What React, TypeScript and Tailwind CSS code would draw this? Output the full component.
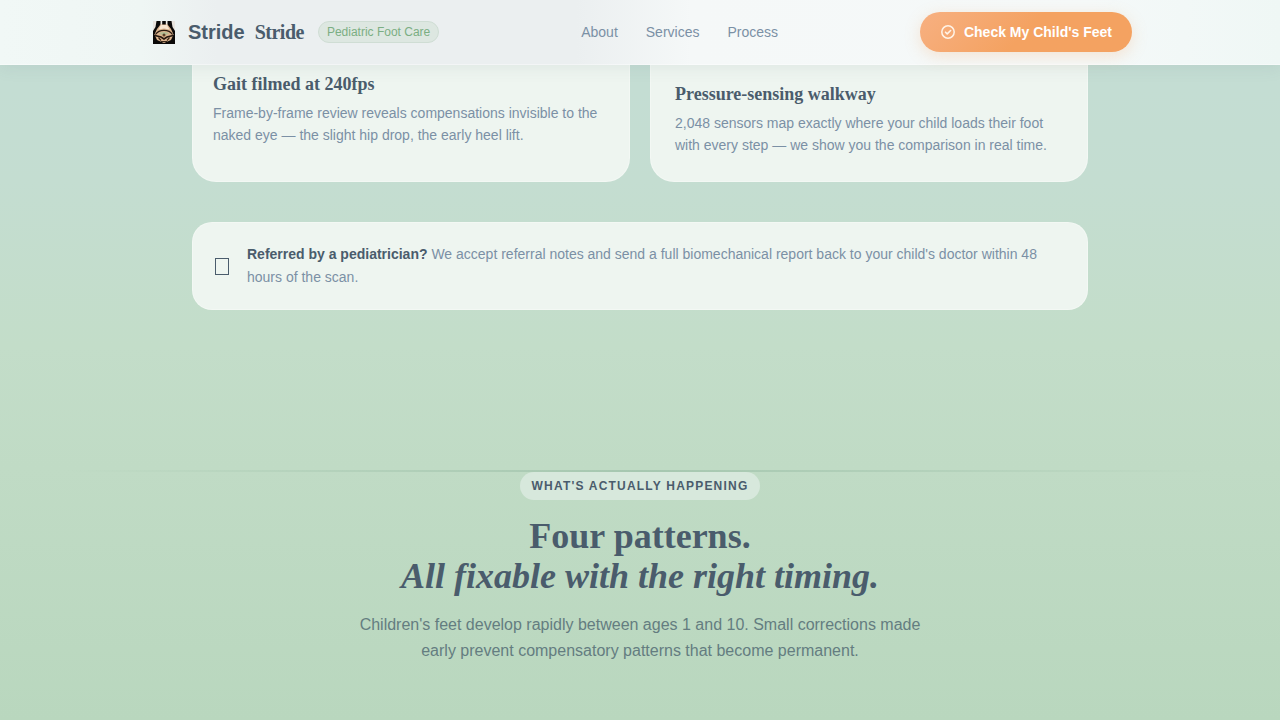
import React from 'react';

const navLinks = [
  { label: 'About', href: '#about' },
  { label: 'Services', href: '#services' },
  { label: 'Process', href: '#process' },
];

function LogoMark() {
  return (
    <span className="flex w-[30px] justify-center pl-[2px]">
      <svg width="22" height="23" viewBox="0 0 22 23" aria-hidden="true">
        <rect width="22" height="23" fill="#0b0908" />
        <path d="M0 0h3.500L2.500 6 0 10zM22 0h-3.500l1 6L22 10z" fill="#e9e4de" />
        <path d="M7.500 0h1.700v4H7.500zM12.800 0h1.700v4h-1.700z" fill="#f4efe8" />
        <path d="M7.500 3.500h7L18 8l2.500 5.500L18 19l-7 3-7-3-2.500-5.500L4 8z" fill="#dcb48e" />
        <path d="M8 4h6l2.500 4.500L11 7.500 5.500 8.500z" fill="#f9e6d0" />
        <path d="M2.500 13.500C6 8 16 8 19.500 13.500" fill="none" stroke="#2a1c12" strokeWidth="1.2" />
        <path d="M6 12.500c2-2 8-2 10 0L11 15z" fill="#b3bd94" />
        <path d="M2 14.500l6 1.500 3 2 3-2 6-1.500" fill="none" stroke="#24170e" strokeWidth="1.600" />
        <path d="M5.500 16.500l2.500 3M16.500 16.500l-2.500 3M8 20.500h6" fill="none" stroke="#3a2718" strokeWidth="1.200" />
        <circle cx="11" cy="14" r="1.500" fill="#5d4128" />
      </svg>
    </span>
  );
}

function CheckIcon() {
  return (
    <svg width="16" height="16" viewBox="0 0 16 16" fill="none" stroke="#fff3e6" aria-hidden="true">
      <circle cx="8" cy="8" r="6.200" strokeWidth="1.500" />
      <path d="M5.500 8.200l1.700 1.700 3.400-3.400" strokeWidth="1.600" strokeLinecap="round" strokeLinejoin="round" />
    </svg>
  );
}

function Header() {
  return (
    <header className="sticky top-0 z-10 border-b border-white/40 bg-[linear-gradient(90deg,#f1f8f6_0%,#eff6f4_11%,#ebeff0_17%,#ebeff0_45%,#f5f8f8_54%,#f5f9f9_85%,#eff7f5_100%)] shadow-[0_2px_16px_rgba(74,94,109,0.1)]">
      <div className="mx-auto flex h-16 max-w-[984px] items-center justify-between">
        <div className="flex items-center gap-[10px]">
          <a href="#top" className="flex items-center gap-[10px] text-xl font-bold text-[#4a5c6c]">
            <LogoMark />
            <span>Stride</span>
            <span className="font-['Liberation_Serif',serif] tracking-tight">Stride</span>
          </a>
          <span className="ml-1 rounded-full border border-[#cfddd4] bg-[#dde7e1] px-2 text-xs leading-5 text-[#7bae83]">
            Pediatric Foot Care
          </span>
        </div>
        <nav className="flex items-center gap-7 text-sm text-[#7b90a5]">
          {navLinks.map((link) => (
            <a key={link.label} href={link.href} className="hover:text-[#4a5c6c]">
              {link.label}
            </a>
          ))}
        </nav>
        <button
          type="button"
          className="flex h-10 items-center gap-2 rounded-full bg-linear-135 from-[#f7b081] to-[#f4a261] to-50% px-5 text-sm font-bold text-white shadow-[0_4px_16px_rgba(244,162,97,0.25)]"
        >
          <CheckIcon />
          Check My Child's Feet
        </button>
      </div>
    </header>
  );
}

function FeatureCard({ title, children, className }: { title: string; children: React.ReactNode; className: string }) {
  return (
    <article className={`rounded-b-3xl border border-t-0 border-white/30 bg-[#eef5f0] ${className}`}>
      <h3 className="mb-1 font-['Liberation_Serif',serif] text-lg font-bold text-[#4a5c6c]">{title}</h3>
      <p className="text-sm leading-[22px] text-[#7b90a5]">{children}</p>
    </article>
  );
}

export default function App() {
  return (
    <div
      id="top"
      className="min-h-screen bg-[linear-gradient(180deg,#c4ddd5_0%,#c4ddd1_25%,#c3ddc9_48%,#c0dbc5_65%,#b9d7be_100%)] font-['Liberation_Sans',sans-serif]"
    >
      <Header />
      <main>
        <section id="services" className="mx-auto max-w-4xl">
          <div className="grid grid-cols-2 gap-5">
            <FeatureCard title="Gait filmed at 240fps" className="px-5 pt-[5px] pb-8">
              Frame-by-frame review reveals compensations invisible to the naked eye — the slight hip drop, the early
              heel lift.
            </FeatureCard>
            <FeatureCard title="Pressure-sensing walkway" className="px-6 pt-[15px] pb-[25px]">
              2,048 sensors map exactly where your child loads their foot with every step — we show you the comparison
              in real time.
            </FeatureCard>
          </div>

          <div className="mt-10 flex items-center gap-4 rounded-[20px] border border-white/30 bg-[#eef5f0] p-5">
            <span className="flex w-[18px] shrink-0 justify-center">
              <span className="h-[17px] w-[14px] border border-[#4a5c6c]" />
            </span>
            <p className="text-sm leading-[23px] text-[#7b90a5]">
              <strong className="font-bold text-[#4a5c6c]">Referred by a pediatrician?</strong> We accept referral notes
              and send a full biomechanical report back to your child's doctor within 48 hours of the scan.
            </p>
          </div>
        </section>

        <section id="process" className="mt-40 pb-14 text-center">
          <div className="h-[2px] bg-[linear-gradient(90deg,transparent_5%,#a6c7b0_50%,transparent_95%)]" />
          <span className="inline-block rounded-full bg-[#d7e8dc] px-3 py-1 text-xs leading-5 font-bold tracking-widest text-[#4a5c6c] uppercase">
            What's actually happening
          </span>
          <h2 className="mt-4 font-['Liberation_Serif',serif] text-4xl font-bold text-[#4a5c6c]">
            Four patterns.
            <br />
            <em>All fixable with the right timing.</em>
          </h2>
          <p className="mx-auto mt-4 max-w-xl text-base leading-[26px] text-[#647d80]">
            Children's feet develop rapidly between ages 1 and 10. Small corrections made early prevent compensatory
            patterns that become permanent.
          </p>
        </section>
      </main>
    </div>
  );
}
